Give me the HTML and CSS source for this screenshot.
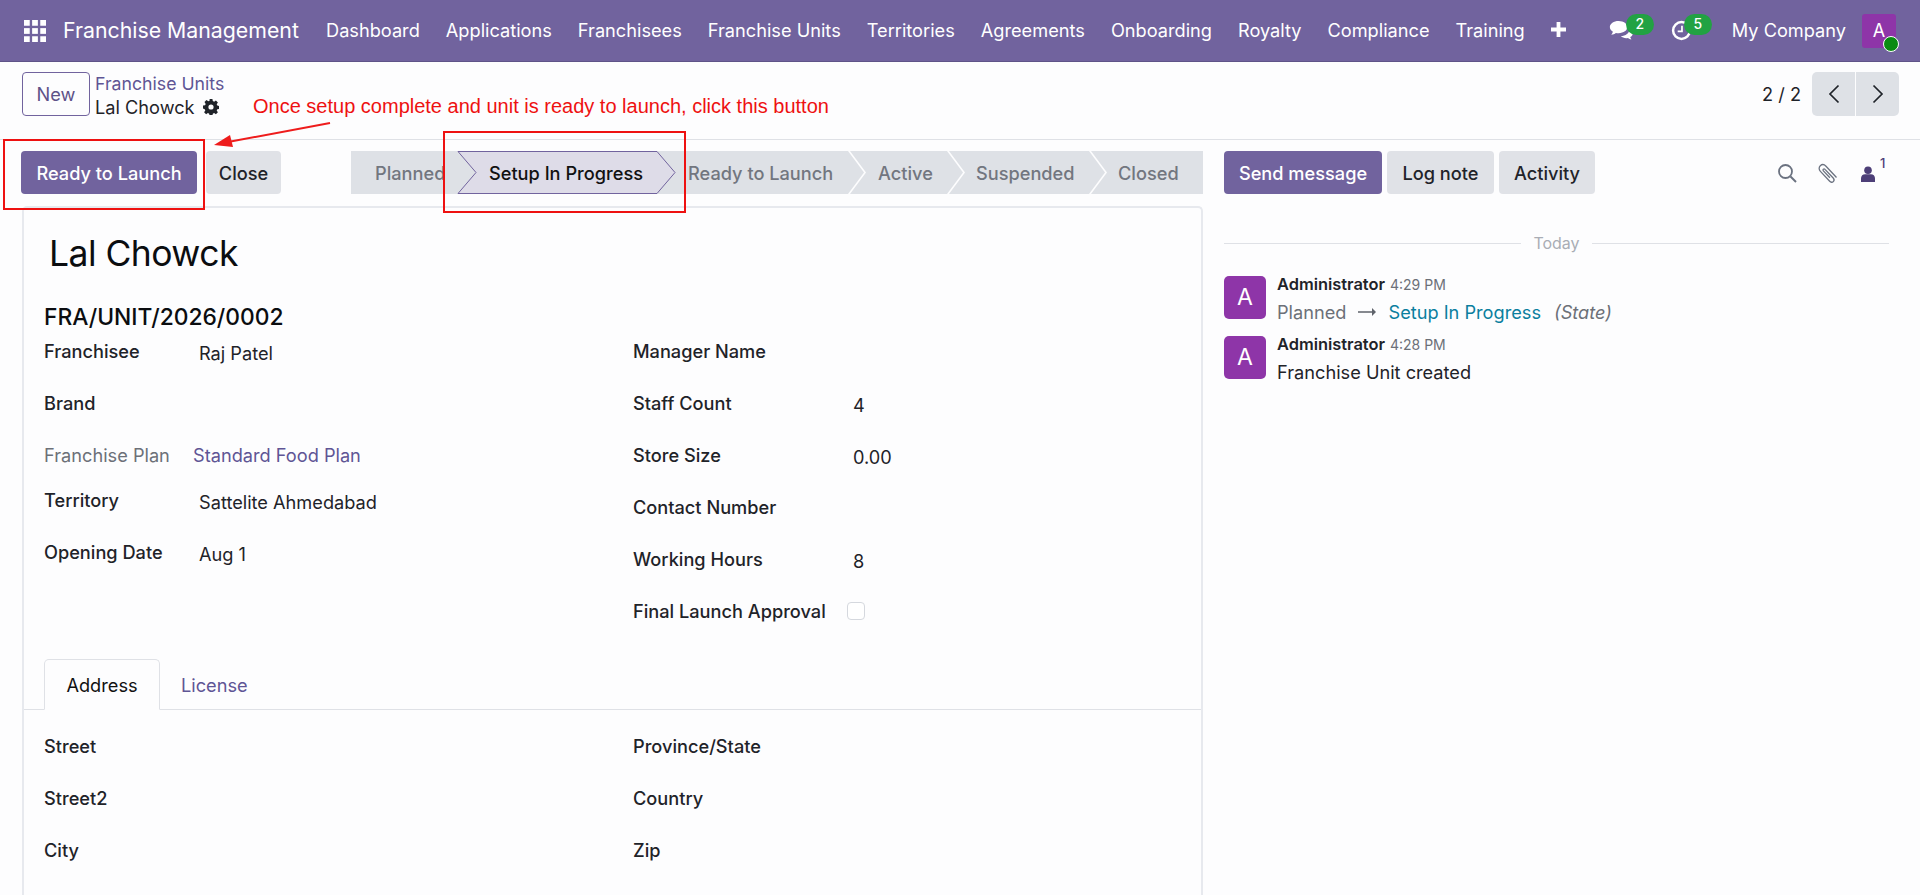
FILE: index.html
```html
<!DOCTYPE html>
<html lang="en">
<head>
<meta charset="utf-8">
<title>Franchise Units - Lal Chowck</title>
<link rel="stylesheet" href="styles.css">
</head>
<body>
<div class="page">
  <header class="navbar">
    <svg class="apps" viewBox="0 0 23 23" aria-hidden="true"><g fill="#fff"><rect x="0" y="0" width="6" height="6"/><rect x="8.5" y="0" width="6" height="6"/><rect x="17" y="0" width="6" height="6"/><rect x="0" y="8.5" width="6" height="6"/><rect x="8.5" y="8.5" width="6" height="6"/><rect x="17" y="8.5" width="6" height="6"/><rect x="0" y="17" width="6" height="6"/><rect x="8.5" y="17" width="6" height="6"/><rect x="17" y="17" width="6" height="6"/></g></svg>
    <span class="brand">Franchise Management</span>
    <nav class="menu">
      <span>Dashboard</span><span>Applications</span><span>Franchisees</span><span>Franchise Units</span><span>Territories</span><span>Agreements</span><span>Onboarding</span><span>Royalty</span><span>Compliance</span><span>Training</span>
      <svg class="plus" viewBox="0 0 15 15" aria-hidden="true"><path d="M5.6 0h3.8v5.6H15v3.8H9.4V15H5.6V9.4H0V5.6h5.6z" fill="#fff"/></svg>
    </nav>
    <div class="systray">
      <div class="tray-icon chat">
        <svg class="tray-svg" viewBox="0 0 26 22" aria-hidden="true"><path d="M10 1C4.8 1 .8 3.8.8 7.4c0 2 1.3 3.8 3.2 5-.3 1.200-.9 2.200-1.700 3 1.900-.2 3.500-.9 4.800-1.900 1 .2 1.900.3 2.900.3 5.200 0 9.200-2.900 9.200-6.400S15.200 1 10 1z" fill="#fff"/><path d="M21 8.500c.2.500.3 1 .3 1.500 0 3.800-3.900 6.700-9 7.100 1.400 1.200 3.400 1.900 5.600 1.900.6 0 1.200 0 1.800-.2 1 .9 2.300 1.400 3.800 1.600-.7-.7-1.100-1.500-1.400-2.500 1.700-1 2.800-2.600 2.800-4.400 0-2.100-1.500-3.900-3.900-5z" fill="#fff"/></svg>
        <span class="count">2</span>
      </div>
      <div class="tray-icon clock">
        <svg class="tray-svg" viewBox="0 0 22 22" aria-hidden="true"><circle cx="11" cy="11" r="8.800" fill="none" stroke="#fff" stroke-width="2.600"/><path d="M11.500 6v6H7" fill="none" stroke="#fff" stroke-width="1.800"/></svg>
        <span class="count">5</span>
      </div>
      <span class="company">My Company</span>
      <div class="user"><span>A</span><i class="presence"></i></div>
    </div>
  </header>

  <section class="control">
    <button class="btn-new">New</button>
    <div class="crumbs">
      <a class="crumb-link">Franchise Units</a>
      <div class="crumb-current">Lal Chowck
        <svg class="gear" viewBox="0 0 16 16" aria-hidden="true"><path fill-rule="evenodd" fill="#1f2329" d="M6.600 0h2.800l.4 2.100 1.300.6 1.800-1.200 2 2-1.200 1.800.6 1.300 2.100.4v2.800l-2.100.4-.6 1.300 1.200 1.800-2 2-1.800-1.200-1.300.6-.4 2.100H6.600l-.4-2.100-1.300-.6-1.800 1.200-2-2 1.200-1.800-.6-1.300L0 9.400V6.600l2.100-.4.600-1.300-1.200-1.800 2-2 1.800 1.200 1.300-.6zM8 5.400a2.600 2.600 0 1 0 0 5.200 2.600 2.600 0 0 0 0-5.200z"/></svg>
      </div>
    </div>
    <div class="pager">
      <span class="pager-text">2 / 2</span>
      <div class="pager-btns">
        <button class="pager-btn"><svg viewBox="0 0 12 20" aria-hidden="true"><path d="M10.500 1.500 2 10l8.500 8.500" fill="none" stroke="#1f2329" stroke-width="1.700"/></svg></button>
        <button class="pager-btn"><svg viewBox="0 0 12 20" aria-hidden="true"><path d="M1.500 1.500 10 10l-8.500 8.500" fill="none" stroke="#1f2329" stroke-width="1.700"/></svg></button>
      </div>
    </div>
  </section>

  <main class="content">
    <div class="form-side">
      <div class="actions">
        <button class="btn primary launch">Ready to Launch</button>
        <button class="btn secondary close">Close</button>
        <div class="status">
          <span class="step step-planned">Planned</span>
          <span class="step step-active">
            <svg class="chev" viewBox="0 0 219 43" aria-hidden="true"><polygon points="1,.5 200,.5 218,21.500 200,42.500 1,42.500 19,21.500" fill="#dedce8" stroke="#71639e"/></svg>
            <b>Setup In Progress</b>
          </span>
          <span class="step step-ready sep">Ready to Launch</span>
          <span class="step step-act sep">Active</span>
          <span class="step step-susp sep">Suspended</span>
          <span class="step step-closed">Closed</span>
        </div>
      </div>

      <article class="card">
        <h1 class="title">Lal Chowck</h1>
        <h2 class="ref">FRA/UNIT/2026/0002</h2>
        <div class="columns">
          <div class="col col-left">
            <div class="row"><label>Franchisee</label><span class="val">Raj Patel</span></div>
            <div class="row"><label>Brand</label></div>
            <div class="row row-plan"><span class="plan-label">Franchise Plan</span><a class="plan-val">Standard Food Plan</a></div>
            <div class="row"><label>Territory</label><span class="val">Sattelite Ahmedabad</span></div>
            <div class="row"><label>Opening Date</label><span class="val">Aug 1</span></div>
          </div>
          <div class="col col-right">
            <div class="row"><label>Manager Name</label></div>
            <div class="row"><label>Staff Count</label><span class="val">4</span></div>
            <div class="row"><label>Store Size</label><span class="val">0.00</span></div>
            <div class="row"><label>Contact Number</label></div>
            <div class="row"><label>Working Hours</label><span class="val">8</span></div>
            <div class="row"><label>Final Launch Approval</label><i class="check"></i></div>
          </div>
        </div>
        <div class="tabs">
          <span class="tab active">Address</span>
          <span class="tab">License</span>
        </div>
        <div class="columns address">
          <div class="col col-left">
            <div class="row"><label>Street</label></div>
            <div class="row"><label>Street2</label></div>
            <div class="row"><label>City</label></div>
          </div>
          <div class="col col-right">
            <div class="row"><label>Province/State</label></div>
            <div class="row"><label>Country</label></div>
            <div class="row"><label>Zip</label></div>
          </div>
        </div>
      </article>
    </div>

    <aside class="chatter">
      <div class="chat-top">
        <button class="btn primary send">Send message</button>
        <button class="btn secondary log">Log note</button>
        <button class="btn secondary activity">Activity</button>
        <div class="chat-tools">
          <svg class="tool" viewBox="0 0 20 20" aria-hidden="true"><circle cx="8.500" cy="8.500" r="6.500" fill="none" stroke="#6b7280" stroke-width="1.800"/><path d="m13.500 13.500 5.500 5.500" stroke="#6b7280" stroke-width="2"/></svg>
          <svg class="tool clip" viewBox="0 0 22 22" aria-hidden="true"><path d="M19.500 15.500 9 4.200C7.300 2.400 4.900 2.200 3.300 3.700s-1.500 4 .1 5.700l9.300 9.900c1 1.100 2.600 1.300 3.600.3s.9-2.500-.1-3.600L8 7.400c-.5-.6-1.200-.6-1.700-.2-.5.500-.4 1.200.1 1.700l6.500 6.900" fill="none" stroke="#6b7280" stroke-width="1.300"/></svg>
          <span class="followers">
            <svg class="person" viewBox="0 0 14 16" aria-hidden="true"><circle cx="7" cy="4.200" r="3.800" fill="#4d3f78"/><path d="M0 16v-3.500C0 9.800 1.800 8.300 4 8.300h6c2.200 0 4 1.500 4 4.200V16z" fill="#4d3f78"/></svg>
            <sup>1</sup>
          </span>
        </div>
      </div>
      <div class="today"><span>Today</span></div>
      <div class="msg first">
        <div class="avatar">A</div>
        <div class="msg-body">
          <div class="msg-head"><b>Administrator</b><small>4:29 PM</small></div>
          <div class="msg-text track"><span class="old">Planned</span><svg class="track-arrow" viewBox="0 0 18 8" aria-hidden="true"><path d="M0 3.200h14V0l4 4-4 4V4.800H0z" fill="#5f636b"/></svg><span class="new">Setup In Progress</span><em>(State)</em></div>
        </div>
      </div>
      <div class="msg">
        <div class="avatar">A</div>
        <div class="msg-body">
          <div class="msg-head"><b>Administrator</b><small>4:28 PM</small></div>
          <div class="msg-text">Franchise Unit created</div>
        </div>
      </div>
    </aside>
  </main>

  <span class="note">Once setup complete and unit is ready to launch, click this button</span>
  <i class="redbox box-launch"></i>
  <i class="redbox box-step"></i>
  <svg class="note-arrow" viewBox="0 0 120 30" aria-hidden="true"><path d="M117 2 15 21" stroke="#ee1c1c" stroke-width="2" fill="none"/><path d="M1 24 17 14l3 12z" fill="#ee1c1c"/></svg>
</div>
</body>
</html>
```

FILE: styles.css
```css
* { box-sizing: border-box; }
html, body { margin: 0; padding: 0; }
body {
  font-family: Inter, "Liberation Sans", sans-serif;
  font-size: 18.2px;
  color: #1f2329;
  background: #fdfdfe;
}
button { font: inherit; border: 0; cursor: pointer; }
.page { position: relative; width: 1920px; height: 895px; overflow: hidden; background: #fdfdfe; }

/* navbar */
.navbar {
  display: flex; align-items: center; height: 62px;
  background: #71639e; color: #fff; border-bottom: 1px solid #5f5388;
  padding-left: 24px;
}
.apps { width: 22px; height: 22px; flex: none; }
.brand { margin: 0 0 2px 17px; font-size: 21.3px; white-space: nowrap; width: 263px; }
.menu { display: flex; align-items: center; gap: 26px; white-space: nowrap; margin-bottom: 2px; }
.plus { width: 15px; height: 15px; }
.systray { display: flex; align-items: center; margin-left: auto; padding-right: 24px; }
.tray-icon { position: relative; height: 30px; display: flex; align-items: center; }
.tray-svg { display: block; }
.chat .tray-svg { width: 25px; height: 21px; }
.clock { margin-left: 37px; }
.clock .tray-svg { width: 21px; height: 21px; }
.count {
  position: absolute; top: -2px; left: 17px;
  min-width: 28px; height: 21px; border-radius: 11px;
  background: #22a243; color: #fff; font-size: 14px; font-weight: 500;
  text-align: center; line-height: 20px;
}
.clock .count { left: 13px; }
.company { margin: 0 0 2px 40px; white-space: nowrap; }
.user {
  position: relative; width: 34px; height: 34px; margin-left: 16px;
  background: #8e35a8; border-radius: 3px;
  text-align: center; line-height: 34px; font-size: 18px;
}
.presence {
  position: absolute; right: -3px; bottom: -4px; width: 16px; height: 16px;
  background: #0a8a12; border: 1.500px solid #fff; border-radius: 50%;
}

/* control panel */
.control {
  display: flex; align-items: flex-start; height: 78px;
  padding: 10px 21px 0 22px; border-bottom: 1px solid #dfe1e6;
}
.btn-new {
  width: 68px; height: 44px; background: #fdfdfe; color: #5d5288;
  border: 1px solid #71639e; border-radius: 4px; font-size: 18.2px;
}
.crumbs { margin-left: 5px; padding-top: 1px; white-space: nowrap; }
.crumb-link { display: block; color: #5f5595; font-size: 17.7px; line-height: 22px; }
.crumb-current { color: #1f2329; font-size: 18.2px; line-height: 24px; display: flex; align-items: center; gap: 8px; }
.gear { width: 16px; height: 16px; }
.pager { margin-left: auto; display: flex; align-items: center; gap: 11px; }
.pager-btns { display: flex; gap: 1px; border-radius: 5px; overflow: hidden; }
.pager-btn { width: 43px; height: 44px; background: #dee1e6; display: flex; align-items: center; justify-content: center; padding: 0; }
.pager-btn svg { width: 12px; height: 20px; }

/* main */
.content { display: flex; align-items: flex-start; }
.form-side { width: 1203px; flex: none; }
.actions { display: flex; align-items: center; padding: 11px 0 12px 21px; height: 66px; }
.btn { height: 43px; border-radius: 4px; font-size: 18.2px; padding: 0; white-space: nowrap; }
.primary { background: #71639e; color: #fff; font-weight: 500; }
.secondary { background: #e0e2e7; color: #1f2329; font-weight: 500; }
.launch { width: 176px; }
.close { width: 75px; margin-left: 9px; }

.status { display: flex; margin-left: 70px; width: 852px; height: 43px; background: #dee1e6; white-space: nowrap; color: #72767f; font-weight: 500; font-size: 18.2px; }
.step { position: relative; display: flex; align-items: center; height: 43px; }
.step-planned { width: 106px; padding-left: 24px; }
.step-active { width: 219px; padding-left: 32px; color: #111; }
.step-active b { position: relative; font-weight: 500; }
.chev { position: absolute; left: 0; top: 0; width: 219px; height: 43px; }
.step-ready { width: 172px; padding-left: 12px; }
.step-act { width: 99px; padding-left: 30px; }
.step-susp { width: 142px; padding-left: 29px; }
.step-closed { width: 114px; padding-left: 29px; }
.sep::after {
  content: ""; position: absolute; right: -18px; top: 0; width: 18px; height: 43px;
  background: #fdfdfe;
  clip-path: polygon(0 0, 2px 0, 100% 50%, 2px 100%, 0 100%, 16px 50%);
}

/* card */
.card {
  margin-left: 22px; height: 800px;
  border: 2px solid #e7e9ee; border-bottom: 0; border-radius: 5px 5px 0 0;
  background: #fdfdfe;
}
.title { margin: 0; padding: 23px 0 0 25px; font-size: 35.5px; letter-spacing: -.55px; line-height: 46px; font-weight: 400; color: #0b0d10; }
.ref { margin: 25px 0 0; padding-left: 20px; font-size: 22.8px; line-height: 30px; font-weight: 500; color: #0b0d10; }
.columns { display: flex; padding: 0 0 0 20px; }
.col { display: flex; flex-direction: column; gap: 14px; }
.col-left { width: 589px; }
.row { display: flex; align-items: center; height: 38px; white-space: nowrap; }
.row label { font-weight: 500; }
.col-left .row label { width: 155px; }
.col-right .row label { width: 220px; }
.val { position: relative; top: 2px; }
.row-plan { height: 31px; align-items: flex-start; line-height: 38px; }
.plan-label { width: 149px; color: #6c7078; }
.plan-val { color: #5f5595; }
.check { width: 18px; height: 18px; margin-left: -6px; border: 1px solid #d5d8de; border-radius: 4px; background: #fff; }

.tabs { display: flex; margin-top: 29px; height: 51px; padding-left: 20px; border-bottom: 1px solid #dfe1e6; }
.tab { display: flex; align-items: center; justify-content: center; height: 51px; width: 116px; color: #5f5595; }
.tab + .tab { width: auto; margin-left: 21px; }
.tab.active { color: #111; background: #fdfdfe; border: 1px solid #dfe1e6; border-bottom-color: #fdfdfe; border-radius: 5px 5px 0 0; }
.address { padding-top: 17px; }

/* chatter */
.chatter { flex: 1; padding: 11px 31px 0 21px; }
.chat-top { display: flex; align-items: center; height: 43px; gap: 5px; }
.send { width: 158px; }
.log { width: 107px; }
.activity { width: 96px; }
.chat-tools { display: flex; align-items: center; margin-left: auto; }
.tool { width: 20px; height: 20px; }
.clip { width: 22px; height: 22px; margin-left: 20px; }
.followers { position: relative; display: flex; margin-left: 22px; width: 28px; }
.person { width: 14px; height: 16px; margin-top: 3px; }
.followers sup { position: absolute; left: 19px; top: -7px; font-size: 13px; font-weight: 500; color: #4d3f78; line-height: 14px; }
.today { display: flex; align-items: center; gap: 12px; margin-top: 38px; height: 22px; color: #a9adb5; font-size: 16px; }
.today::before, .today::after { content: ""; flex: 1; height: 1px; background: #dfe1e6; }
.msg { display: flex; gap: 11px; height: 60px; }
.msg.first { margin-top: 22px; }
.avatar { width: 42px; height: 43px; flex: none; border-radius: 5px; background: #8e35a8; color: #fff; font-size: 23px; text-align: center; line-height: 43px; }
.msg-head { display: flex; align-items: baseline; gap: 5px; line-height: 17px; }
.msg-head b { font-size: 16.4px; font-weight: 600; }
.msg-head small { font-size: 14px; color: #6c7078; }
.msg-text { margin-top: 8px; line-height: 22px; white-space: nowrap; }
.track { display: flex; align-items: center; }
.old { color: #6c7078; }
.track-arrow { width: 18px; height: 8px; margin: 0 12px; }
.new { color: #0b7f9e; }
.track em { margin-left: 13px; color: #6c7078; }

/* annotations laid over the screenshot */
.note { position: absolute; left: 253px; top: 94px; font-family: "Liberation Sans", Arial, sans-serif; font-size: 20px; line-height: 24px; color: #ee1111; white-space: nowrap; }
.redbox { position: absolute; border: 2.500px solid #ee1111; }
.box-launch { left: 3px; top: 139px; width: 202px; height: 71px; }
.box-step { left: 443px; top: 131px; width: 243px; height: 82px; }
.note-arrow { position: absolute; left: 213px; top: 121px; width: 120px; height: 30px; }
```
